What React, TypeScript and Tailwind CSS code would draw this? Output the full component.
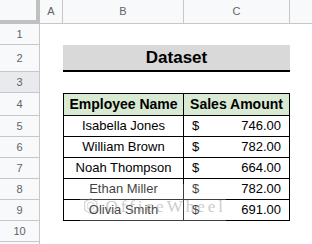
import React from "react";

const rows = [
	{ name: "Isabella Jones", amount: "746.00" },
	{ name: "William Brown", amount: "782.00" },
	{ name: "Noah Thompson", amount: "664.00" },
	{ name: "Ethan Miller", amount: "782.00" },
	{ name: "Olivia Smith", amount: "691.00" },
];

function RowHead({ n, active }: { n: number; active?: boolean }) {
	return (
		<div
			className={`flex items-center justify-center border-r border-b border-[#c7c7c7] text-[11px] text-[#5f6368] ${
				active ? "bg-[#e8eaed]" : "bg-[#f8f9fa]"
			}`}
		>
			{n}
		</div>
	);
}

function ColHead({ label }: { label: string }) {
	return (
		<div className="flex items-center justify-center border-r border-b border-[#c7c7c7] bg-[#f8f9fa] text-[11px] text-[#5f6368]">
			{label}
		</div>
	);
}

export default function App() {
	return (
		<div className="relative h-[244px] w-[312px] overflow-hidden bg-white font-['Liberation_Sans',Arial,sans-serif] text-black">
			<div className="grid grid-cols-[40px_23px_121px_106px_1fr] grid-rows-[24px_21px_27px_21px_23px_21px_21px_21px_21px_21px_21px_1fr] h-full">
				{/* header row */}
				<div className="border-r-4 border-b-4 border-[#c0c0c0] bg-[#f8f9fa]" />
				<ColHead label="A" />
				<ColHead label="B" />
				<ColHead label="C" />
				<div className="border-b border-[#c7c7c7] bg-[#f8f9fa]" />

				{/* row 1 */}
				<RowHead n={1} />
				<div className="col-span-4" />

				{/* row 2 */}
				<RowHead n={2} />
				<div />
				<div className="col-span-2 flex items-center justify-center border-b-2 border-black bg-[#d9d9d9] text-[17px] font-bold">
					Dataset
				</div>
				<div />

				{/* row 3 */}
				<RowHead n={3} active />
				<div className="col-span-4" />

				{/* row 4 */}
				<RowHead n={4} />
				<div />
				<div className="flex items-center justify-center border border-black bg-[#d9ead3] text-[14px] font-bold">
					Employee Name
				</div>
				<div className="flex items-center justify-center border-t border-r border-b border-black bg-[#d9ead3] text-[14px] font-bold">
					Sales Amount
				</div>
				<div />

				{rows.map((r, i) => (
					<React.Fragment key={r.name}>
						<RowHead n={5 + i} />
						<div />
						<div className="flex items-center justify-center border-r border-b border-l border-black text-[13px]">
							{r.name}
						</div>
						<div className="flex items-center justify-between border-r border-b border-black px-2 text-[13px]">
							<span>$</span>
							<span>{r.amount}</span>
						</div>
						<div />
					</React.Fragment>
				))}

				{/* row 10 */}
				<RowHead n={10} />
				<div className="col-span-4" />

				<div className="border-r border-[#c7c7c7] bg-[#f8f9fa]" />
				<div className="col-span-4" />
			</div>

			{/* watermark */}
			<div className="pointer-events-none absolute left-[80px] top-[184px] flex h-[44px] w-[146px] items-center gap-2 bg-white/25 pl-1">
				<svg width="20" height="24" viewBox="0 0 20 24" className="opacity-30">
					<path d="M10 1 L19 6 L19 18 L10 23 L1 18 L1 6 Z" fill="none" stroke="#888" strokeWidth="2" />
					<path d="M10 6 L14.5 8.5 L14.5 15.5 L10 18 L5.5 15.5 L5.5 8.5 Z" fill="none" stroke="#888" strokeWidth="1.5" />
				</svg>
				<span className="mt-[2px] font-['Liberation_Serif',serif] text-[17px] tracking-[3px] text-[#9a9a9a] opacity-50">
					OfficeWheel
				</span>
			</div>
		</div>
	);
}
